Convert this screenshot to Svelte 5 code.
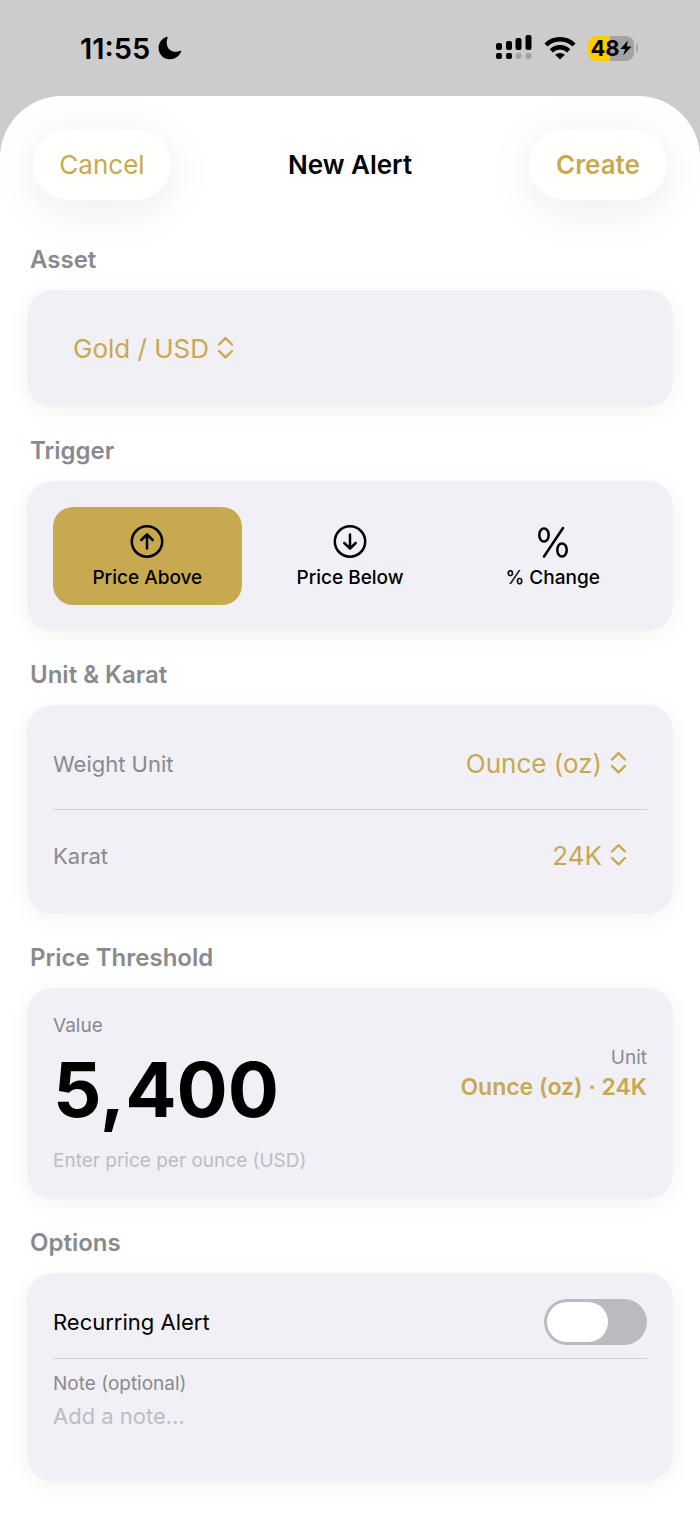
<script lang="ts">
type Trigger = "above" | "below" | "change";

const triggers: { id: Trigger; label: string }[] = [
  { id: "above", label: "Price Above" },
  { id: "below", label: "Price Below" },
  { id: "change", label: "% Change" },
];
const assets = ["Gold / USD", "Silver / USD"];
const units = ["Ounce (oz)", "Gram (g)"];
const karats = ["24K", "22K", "18K"];

let asset = $state("Gold / USD");
let trigger = $state<Trigger>("above");
let unit = $state("Ounce (oz)");
let karat = $state("24K");
let price = $state("5,400");
let recurring = $state(false);
let note = $state("");
</script>

{#snippet chevrons()}
  <svg class="chevrons" viewBox="0 0 17 26" fill="none" stroke="currentColor" stroke-width="2.4" stroke-linecap="round" stroke-linejoin="round" aria-hidden="true">
    <path d="M2 8.500l6.500-6.300 6.500 6.300"/>
    <path d="M2 15l6.500 6.300 6.500-6.300"/>
  </svg>
{/snippet}

<div class="screen">
  <div class="status-bar">
    <div class="status-group">
      <span class="time">11:55</span>
      <svg width="24" height="24" viewBox="0 0 24 24" aria-hidden="true">
        <path d="M8.6 0.8C3.9 2.5 0.6 6.9 0.6 12c0 6.300 5 11.300 11.300 11.300 5.100 0 9.600-3.200 11.300-7.700.2-.7-.3-1.100-.9-.8-1.400.6-2.800.9-4.300.9-5.600 0-9.300-3.700-9.300-9.300 0-1.600.3-3.200.9-4.600.3-.7-.2-1.300-1-1z"/>
      </svg>
    </div>
    <div class="status-group right">
      <svg width="36" height="26" viewBox="0 0 36 26" aria-hidden="true">
        <rect x="0" y="8" width="6" height="7" rx="2"/>
        <rect x="10" y="6" width="6" height="9" rx="2"/>
        <rect x="19.500" y="3" width="6" height="12" rx="2"/>
        <rect x="29.500" y="0" width="6" height="15" rx="2"/>
        <rect x="0" y="18" width="6" height="6" rx="2"/>
        <rect x="10" y="18" width="6" height="6" rx="2"/>
        <rect x="19.500" y="18" width="6" height="6" rx="2" fill="#a3a3a3"/>
        <rect x="29.500" y="18" width="6" height="6" rx="2" fill="#a3a3a3"/>
      </svg>
      <svg width="32" height="24" viewBox="0 0 32 24" aria-hidden="true">
        <path d="M2 9a20 20 0 0 1 28 0" fill="none" stroke="#000" stroke-width="4.500"/>
        <path d="M7.300 14.800a12.500 12.500 0 0 1 17.400 0" fill="none" stroke="#000" stroke-width="4.500"/>
        <path d="M16 23.500l-4.800-4.700a7 7 0 0 1 9.600 0z"/>
      </svg>
      <div class="battery">
        <div class="battery-body">
          <span>48</span>
          <svg width="12" height="16" viewBox="0 0 13 16" aria-hidden="true">
            <path d="M8.500 0L0.500 9h5L3.500 16 12.500 6.500H7.300z"/>
          </svg>
        </div>
        <div class="battery-tip"></div>
      </div>
    </div>
  </div>

  <form class="sheet" onsubmit={(e) => e.preventDefault()}>
    <header>
      <button type="button" class="pill">Cancel</button>
      <h1>New Alert</h1>
      <button type="submit" class="pill strong">Create</button>
    </header>

    <section>
      <h2>Asset</h2>
      <div class="card">
        <label class="picker">
          <select bind:value={asset} aria-label="Asset">
            {#each assets as item}
              <option>{item}</option>
            {/each}
          </select>
          {@render chevrons()}
        </label>
      </div>
    </section>

    <section>
      <h2>Trigger</h2>
      <div class="card triggers">
        {#each triggers as item (item.id)}
          <button type="button" class="trigger" class:selected={trigger === item.id} aria-pressed={trigger === item.id} onclick={() => (trigger = item.id)}>
            <svg width="34" height="34" viewBox="0 0 34 34" fill="none" stroke="currentColor" stroke-width="2.500" stroke-linecap="round" stroke-linejoin="round" aria-hidden="true">
              {#if item.id === "above"}
                <circle cx="17" cy="17.500" r="15.200"/>
                <path d="M17 24.500v-14M11.300 16l5.700-5.700 5.700 5.700"/>
              {:else if item.id === "below"}
                <circle cx="17" cy="17.500" r="15.200"/>
                <path d="M17 10.500v14M11.300 19l5.700 5.700 5.700-5.700"/>
              {:else}
                <path d="M27 4L8 32.500"/>
                <ellipse cx="8" cy="11" rx="4.700" ry="6.600"/>
                <ellipse cx="26" cy="26" rx="4.700" ry="6.600"/>
              {/if}
            </svg>
            <span>{item.label}</span>
          </button>
        {/each}
      </div>
    </section>

    <section>
      <h2>Unit &amp; Karat</h2>
      <div class="card">
        <div class="row">
          <label for="unit">Weight Unit</label>
          <div class="picker">
            <select id="unit" bind:value={unit}>
              {#each units as item}
                <option>{item}</option>
              {/each}
            </select>
            {@render chevrons()}
          </div>
        </div>
        <hr />
        <div class="row">
          <label for="karat">Karat</label>
          <div class="picker">
            <select id="karat" bind:value={karat}>
              {#each karats as item}
                <option>{item}</option>
              {/each}
            </select>
            {@render chevrons()}
          </div>
        </div>
      </div>
    </section>

    <section>
      <h2>Price Threshold</h2>
      <div class="card">
        <div class="row">
          <div class="value">
            <label class="small" for="price">Value</label>
            <input id="price" class="price" type="text" inputmode="decimal" bind:value={price} />
          </div>
          <div class="unit">
            <span class="small">Unit</span>
            <strong>{unit} · {karat}</strong>
          </div>
        </div>
        <p class="small hint">Enter price per ounce (USD)</p>
      </div>
    </section>

    <section>
      <h2>Options</h2>
      <div class="card">
        <div class="row">
          <label class="primary" for="recurring">Recurring Alert</label>
          <input id="recurring" class="switch" type="checkbox" role="switch" bind:checked={recurring} />
        </div>
        <hr />
        <label class="small" for="note">Note (optional)</label>
        <textarea id="note" rows="1" placeholder="Add a note..." bind:value={note}></textarea>
      </div>
    </section>
  </form>
</div>

<style>
  .screen {
    min-height: 100vh;
    display: flex;
    flex-direction: column;
    background: #ccc;
    color: #000;
    font-family: Inter, "Liberation Sans", sans-serif;
  }

  button,
  input,
  select,
  textarea {
    margin: 0;
    padding: 0;
    border: 0;
    background: none;
    color: inherit;
    font: inherit;
  }

  svg {
    display: block;
    flex: none;
  }

  .status-bar {
    height: 96px;
    box-sizing: border-box;
    padding: 0 62px 0 80px;
    display: flex;
    align-items: center;
    justify-content: space-between;
  }

  .status-group {
    display: flex;
    align-items: center;
    gap: 8px;
  }

  .status-group.right {
    gap: 12px;
  }

  .time {
    font-size: 29px;
    font-weight: 600;
  }

  .battery {
    display: flex;
    align-items: center;
    gap: 2px;
  }

  .battery-body {
    width: 46px;
    height: 25px;
    display: flex;
    align-items: center;
    justify-content: center;
    border-radius: 8px;
    background: linear-gradient(to right, #fc0 48%, #a3a3a3 48%);
    font-size: 22px;
    font-weight: 700;
  }

  .battery-tip {
    width: 2px;
    height: 8px;
    border-radius: 0 2px 2px 0;
    background: #a3a3a3;
  }

  .sheet {
    flex: 1;
    padding: 33px 27px 37px;
    border-radius: 62px 62px 0 0;
    background: #fff;
  }

  header {
    display: flex;
    align-items: center;
    justify-content: space-between;
    padding: 0 6px 16px;
  }

  h1 {
    margin: 0;
    font-size: 26px;
    font-weight: 600;
  }

  .pill {
    width: 138px;
    height: 71px;
    border-radius: 36px;
    background: #fffffe;
    box-shadow: 0 8px 50px rgba(0, 0, 0, 0.08);
    color: #c7a94f;
    font-size: 26px;
  }

  .pill.strong {
    font-weight: 600;
  }

  h2 {
    margin: 0;
    padding: 29px 3px 15px;
    color: #8a8a8e;
    font-size: 24px;
    font-weight: 600;
    line-height: 30px;
  }

  .card {
    padding: 26px;
    border-radius: 26px;
    background: #f1f0f6;
    box-shadow: 0 4px 24px rgba(0, 0, 0, 0.05);
  }

  .row {
    display: flex;
    align-items: center;
    justify-content: space-between;
  }

  .row label {
    color: #8a8a8e;
    font-size: 22px;
  }

  .row label.primary {
    color: #000;
  }

  .picker {
    width: fit-content;
    height: 65px;
    padding: 0 20px;
    display: flex;
    align-items: center;
    gap: 8px;
    color: #c7a94f;
  }

  .picker select {
    appearance: none;
    field-sizing: content;
    font-size: 26px;
    line-height: 34px;
  }

  .chevrons {
    width: 17px;
    height: 26px;
  }

  hr {
    height: 1px;
    margin: 13px 0;
    border: 0;
    background: #d1d0d6;
  }

  .triggers {
    display: grid;
    grid-template-columns: repeat(3, 1fr);
    gap: 14px;
  }

  .trigger {
    padding: 17px 0 15px;
    display: flex;
    flex-direction: column;
    align-items: center;
    gap: 8px;
    border-radius: 20px;
    font-size: 19px;
    font-weight: 500;
    line-height: 24px;
  }

  .trigger.selected {
    background: #c7a94f;
  }

  .small,
  .row .small {
    display: block;
    color: #8a8a8e;
    font-size: 19px;
    line-height: 24px;
  }

  .value {
    flex: 1;
    min-width: 0;
  }

  .price {
    display: block;
    width: 100%;
    height: 92px;
    margin-top: 5px;
    font-size: 76px;
    font-weight: 700;
  }

  .unit {
    text-align: right;
  }

  .unit strong {
    display: block;
    color: #c7a94f;
    font-size: 23px;
    font-weight: 600;
    line-height: 34px;
  }

  .small.hint {
    margin: 14px 0 0;
    color: #bdbdc2;
  }

  .switch {
    appearance: none;
    width: 103px;
    height: 46px;
    padding: 3px;
    box-sizing: border-box;
    border-radius: 23px;
    background: #bbbac0;
  }

  .switch::before {
    content: "";
    display: block;
    width: 61px;
    height: 40px;
    border-radius: 20px;
    background: #fff;
  }

  .switch:checked {
    background: #c7a94f;
  }

  .switch:checked::before {
    margin-left: auto;
  }

  textarea {
    display: block;
    width: 100%;
    margin-top: 5px;
    padding-bottom: 24px;
    box-sizing: border-box;
    resize: none;
    font-size: 22px;
    line-height: 30px;
  }

  textarea::placeholder {
    color: #bdbdc2;
  }
</style>
